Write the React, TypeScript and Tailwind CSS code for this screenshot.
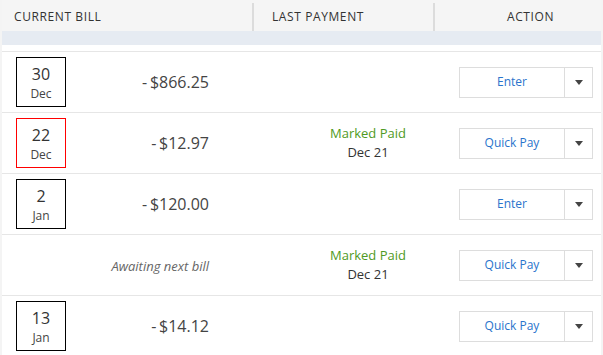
import React from "react";

type Row = {
  day?: string;
  mon?: string;
  red?: boolean;
  amount?: string;
  awaiting?: boolean;
  paid?: boolean;
  action: string;
};

const rows: Row[] = [
  { day: "30", mon: "Dec", amount: "-\u2009$866.25", action: "Enter" },
  { day: "22", mon: "Dec", red: true, amount: "-\u2009$12.97", paid: true, action: "Quick Pay" },
  { day: "2", mon: "Jan", amount: "-\u2009$120.00", action: "Enter" },
  { awaiting: true, paid: true, action: "Quick Pay" },
  { day: "13", mon: "Jan", amount: "-\u2009$14.12", action: "Quick Pay" },
];

export default function App() {
  return (
    <div
      className="w-[603px] h-[355px] overflow-hidden bg-[#f4f4f4] text-[#333]"
      style={{ fontFamily: '"Open Sans", "Noto Sans", sans-serif' }}
    >
      <div className="mx-[2px] flex flex-col bg-white">
        {/* header */}
        <div className="h-[31px] shrink-0 flex bg-[#f5f5f5] text-[12px] tracking-[0.6px] uppercase text-[#333]">
          <div className="w-[252px] shrink-0 flex items-center pl-[12px] border-r-2 border-[#dcdcdc] mt-[3px]">
            Current Bill
          </div>
          <div className="w-[181px] shrink-0 flex items-center pl-[18px] border-r-2 border-[#dcdcdc] mt-[3px]">
            Last Payment
          </div>
          <div className="flex-1 flex items-center pl-[72px] mt-[3px]">Action</div>
        </div>
        <div className="h-[14px] shrink-0 bg-[#e6ebf2]" />
        <div className="h-[7px] shrink-0 border-b border-[#e6e6e6]" />
        {rows.map((r, i) => (
          <div key={i} className="h-[61px] flex items-center border-b border-[#e6e6e6] shrink-0">
            <div className="w-[250px] shrink-0 flex items-center">
              <div className="w-[64px] pl-[14px] shrink-0">
                {r.day && (
                  <div
                    className={`w-[50px] h-[50px] flex flex-col items-center justify-center border ${
                      r.red ? "border-[#ff0000]" : "border-black"
                    }`}
                  >
                    <div className="text-[16px] leading-normal text-[#333]">{r.day}</div>
                    <div className="text-[12px] leading-normal text-[#444] -mt-[1px]">{r.mon}</div>
                  </div>
                )}
              </div>
              <div className="w-[143px] shrink-0 text-right">
                {r.awaiting ? (
                  <span className="italic text-[13px] text-[#666]">Awaiting next bill</span>
                ) : (
                  <span className="text-[16px] text-[#444]">{r.amount}</span>
                )}
              </div>
            </div>
            <div className="w-[207px] shrink-0 pl-[25px] flex flex-col items-center">
              {r.paid && (
                <>
                  <div className="text-[13px] text-[#4f9a24] leading-[18px]">Marked Paid</div>
                  <div className="text-[13px] text-[#333] leading-[20px]">Dec 21</div>
                </>
              )}
            </div>
            <div className="flex h-[31px] border border-[#dddddd] w-[134px] shrink-0">
              <div className="w-[105px] flex items-center justify-center text-[12px] text-[#2a74cc] border-r border-[#dddddd]">
                {r.action}
              </div>
              <div className="flex-1 flex items-center justify-center">
                <svg width="8" height="5" viewBox="0 0 8 5">
                  <path d="M0 0 L8 0 L4 5 Z" fill="#444" />
                </svg>
              </div>
            </div>
          </div>
        ))}
      </div>
    </div>
  );
}
